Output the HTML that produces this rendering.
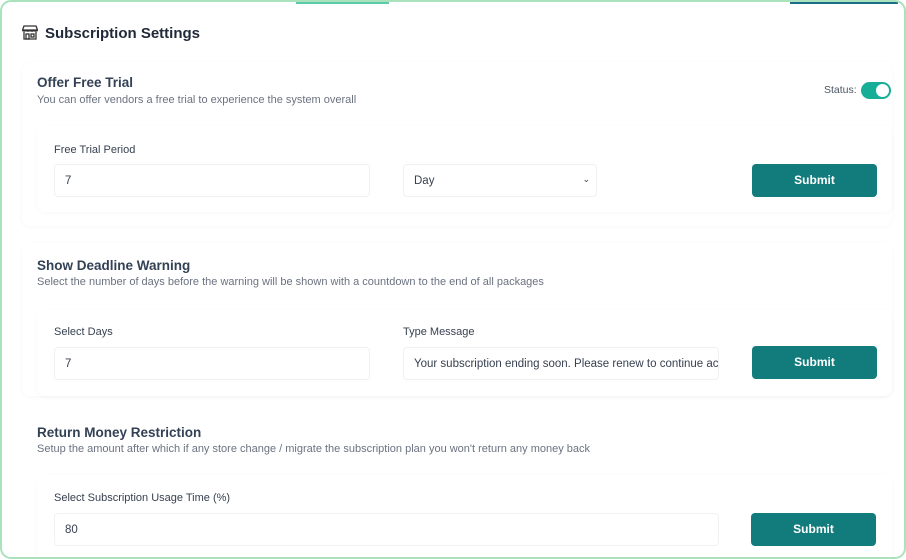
<!DOCTYPE html>
<html><head><meta charset="utf-8"><style>
*{box-sizing:border-box;margin:0;padding:0}
body{width:906px;height:560px;background:#fff;font-family:"Liberation Sans",sans-serif;position:relative;overflow:hidden}
.frame{position:absolute;left:0;top:0;width:906px;height:559px;border:2.5px solid #a9e2bd;border-radius:11px;background:#fff;overflow:hidden}
.wrap{position:absolute;left:1px;top:0;width:906px;height:560px}
.abs{position:absolute}
.card{position:absolute;background:#fff;border-radius:8px;box-shadow:0 1px 5px rgba(0,0,0,.035)}
h2{position:absolute;font-size:13.5px;font-weight:bold;color:#334155}
.sub{position:absolute;font-size:11px;color:#6b7280}
.lbl{position:absolute;font-size:11px;color:#374151}
.inp{position:absolute;height:33px;border:1px solid #f0f1f3;border-radius:4px;font-size:11.5px;color:#374151;padding-left:10px;line-height:33px;background:#fff;white-space:nowrap;overflow:hidden}
.btn{position:absolute;height:33px;width:125px;background:#127b7c;color:#fff;border-radius:4px;font-size:12px;font-weight:bold;text-align:center;line-height:33px}
</style></head><body>
<div class="frame"><div class="wrap">
<div class="abs" style="left:293px;top:0;width:93px;height:2px;background:#5ccaa8"></div>
<div class="abs" style="left:787px;top:0;width:108px;height:2px;background:#1a6c87"></div>
<svg class="abs" style="left:19px;top:23px" width="16" height="15" viewBox="0 0 16 15" fill="none" stroke="#333" stroke-width="1.3"><path d="M2 1h12l1.5 4h-15z"/><path d="M.5 5c0 1.5 3.5 1.5 3.5 0c0 1.5 4 1.5 4 0c0 1.5 4 1.5 4 0c0 1.5 3.5 1.5 3.5 0"/><path d="M2 7v7h12V7"/><rect x="4" y="9" width="3" height="5"/><rect x="9" y="9" width="3" height="3"/></svg>
<div class="abs" style="left:42px;top:23px;font-size:15px;font-weight:bold;color:#1f2937">Subscription Settings</div>

<div class="card" style="left:19px;top:60px;width:870px;height:164px"></div>
<h2 style="left:34px;top:73px">Offer Free Trial</h2>
<div class="sub" style="left:34px;top:92px">You can offer vendors a free trial to experience the system overall</div>
<div class="abs" style="left:821px;top:82px;font-size:10.5px;color:#4b5563">Status:</div>
<div class="abs" style="left:858px;top:80px;width:30px;height:17px;border-radius:9px;background:#17ae98"><div style="position:absolute;right:2px;top:2px;width:13px;height:13px;border-radius:50%;background:#fff"></div></div>
<div class="card" style="left:34px;top:124px;width:855px;height:86px"></div>
<div class="lbl" style="left:51px;top:142px">Free Trial Period</div>
<div class="inp" style="left:51px;top:162px;width:316px">7</div>
<div class="inp" style="left:400px;top:162px;width:194px">Day<span style="position:absolute;right:6px;top:-2px;font-size:9px">&#8964;</span></div>
<div class="btn" style="left:749px;top:162px">Submit</div>

<div class="card" style="left:19px;top:241px;width:870px;height:153px"></div>
<h2 style="left:34px;top:256px">Show Deadline Warning</h2>
<div class="sub" style="left:34px;top:274px">Select the number of days before the warning will be shown with a countdown to the end of all packages</div>
<div class="card" style="left:34px;top:308px;width:855px;height:86px"></div>
<div class="lbl" style="left:51px;top:324px">Select Days</div>
<div class="lbl" style="left:400px;top:324px">Type Message</div>
<div class="inp" style="left:51px;top:345px;width:316px">7</div>
<div class="inp" style="left:400px;top:345px;width:316px">Your subscription ending soon. Please renew to continue access</div>
<div class="btn" style="left:749px;top:344px">Submit</div>

<h2 style="left:34px;top:423px">Return Money Restriction</h2>
<div class="sub" style="left:34px;top:441px">Setup the amount after which if any store change / migrate the subscription plan you won't return any money back</div>
<div class="card" style="left:34px;top:473px;width:855px;height:100px"></div>
<div class="lbl" style="left:51px;top:490px">Select Subscription Usage Time (%)</div>
<div class="inp" style="left:51px;top:511px;width:665px">80</div>
<div class="btn" style="left:748px;top:511px">Submit</div>
</div></div>
</body></html>
